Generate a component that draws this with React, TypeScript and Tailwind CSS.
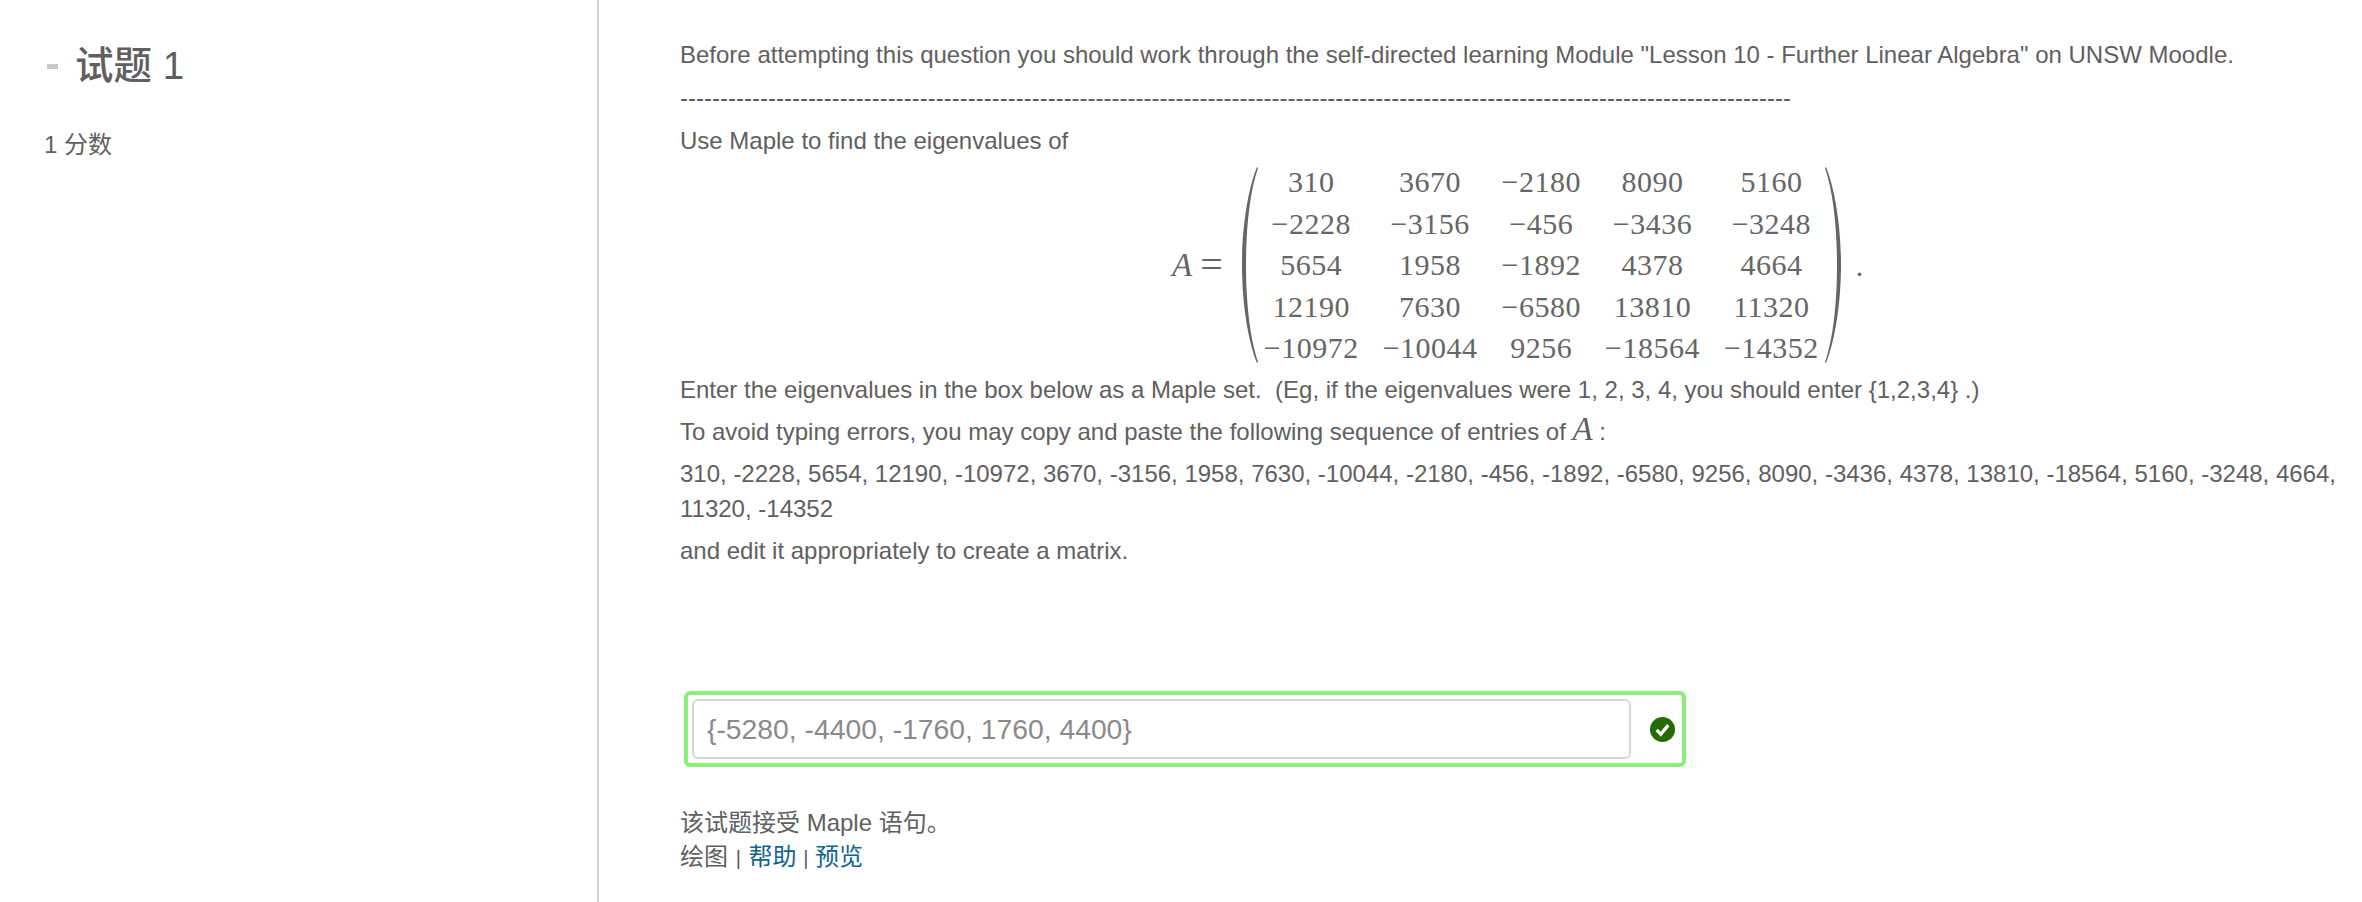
const sans = 'font-["Liberation_Sans","Noto_Sans_CJK_SC",sans-serif]';

const rows = [
  ['310', '3670', '−2180', '8090', '5160'],
  ['−2228', '−3156', '−456', '−3436', '−3248'],
  ['5654', '1958', '−1892', '4378', '4664'],
  ['12190', '7630', '−6580', '13810', '11320'],
  ['−10972', '−10044', '9256', '−18564', '−14352'],
];

function Paren({ flip }: { flip?: boolean }) {
  return (
    <svg width="18" height="196" viewBox="0 0 18 196" className={flip ? 'shrink-0 -scale-x-100' : 'shrink-0'}>
      <path d="M16 0C7 22 1 60 1 98s6 76 15 98l1-1C9 172 5 136 5 98S9 24 17 1z" fill="#666" />
    </svg>
  );
}

function Matrix() {
  return (
    <div className="ml-[492px] flex h-[214px] items-center font-['Liberation_Serif',serif] text-[30px] text-[#666]">
      <span className="text-[33px] italic">A</span>
      <span className="ml-[8px] mr-[18px] text-[40px] leading-none">=</span>
      <Paren />
      <div className="grid grid-cols-[auto_auto_auto_auto_auto] gap-x-[24px] px-[5px] text-center leading-[41.6px] tracking-[0.5px]">
        {rows.flat().map((v, i) => (
          <span key={i}>{v}</span>
        ))}
      </div>
      <Paren flip />
      <span className="ml-[14px]">.</span>
    </div>
  );
}

export default function App() {
  return (
    <div className={`flex h-[902px] overflow-hidden bg-white text-[24px] leading-[35px] text-[#606060] ${sans}`}>
      <div className="w-[599px] shrink-0 border-r-2 border-[#cfcfcf] pl-[44px] pt-[41px]">
        <h3 className="flex items-center text-[38.5px] font-medium leading-[50px] text-[#5f5f5f]">
          <span className="ml-[3px] mr-[17px] h-[5px] w-[11px] bg-[#c8c8c8]" />
          试题 1
        </h3>
        <p className="mt-[36px]">1 分数</p>
      </div>
      <div className="w-[1763px] pl-[81px] pt-[37px]">
        <p>Before attempting this question you should work through the self-directed learning Module "Lesson 10 - Further Linear Algebra" on UNSW Moodle.</p>
        <p className="mt-[8px] whitespace-nowrap">{'-'.repeat(139)}</p>
        <p className="mt-[8px]">Use Maple to find the eigenvalues of</p>
        <Matrix />
        <p>Enter the eigenvalues in the box below as a Maple set.&nbsp; (Eg, if the eigenvalues were 1, 2, 3, 4, you should enter {'{1,2,3,4}'} .)</p>
        <p className="mt-[6px]">
          To avoid typing errors, you may copy and paste the following sequence of entries of{' '}
          <span className="font-['Liberation_Serif',serif] text-[33px] leading-none italic">A</span> :
        </p>
        <p className="mt-[7px] w-[1683px]">310, -2228, 5654, 12190, -10972, 3670, -3156, 1958, 7630, -10044, -2180, -456, -1892, -6580, 9256, 8090, -3436, 4378, 13810, -18564, 5160, -3248, 4664, 11320, -14352</p>
        <p className="mt-[7px]">and edit it appropriately to create a matrix.</p>
        <div className="ml-[4px] mt-[123px] flex h-[76px] w-[1002px] items-center rounded-[6px] border-[4px] border-[#8aee7a] pl-[4px]">
          <div className="flex h-[60px] w-[939px] items-center rounded-[6px] border-2 border-[#d6d6d6] px-[13px] text-[28.3px] text-[#8a8a8a]">
            {'{-5280, -4400, -1760, 1760, 4400}'}
          </div>
          <svg width="27" height="27" viewBox="0 0 28 28" className="ml-[18px]">
            <circle cx="14" cy="14" r="13" fill="#246b06" />
            <path d="M8 14.5l4.2 4.5L20 9.5" fill="none" stroke="#fff" strokeWidth="3.4" />
          </svg>
        </div>
        <p className="mt-[38px]">该试题接受 Maple 语句。</p>
        <p className="-mt-[1px]">
          绘图 <span className="mx-[1px] text-[20px]">|</span> <span className="text-[#0f6491]">帮助</span> <span className="text-[20px]">|</span> <span className="text-[#0f6491]">预览</span>
        </p>
      </div>
    </div>
  );
}
